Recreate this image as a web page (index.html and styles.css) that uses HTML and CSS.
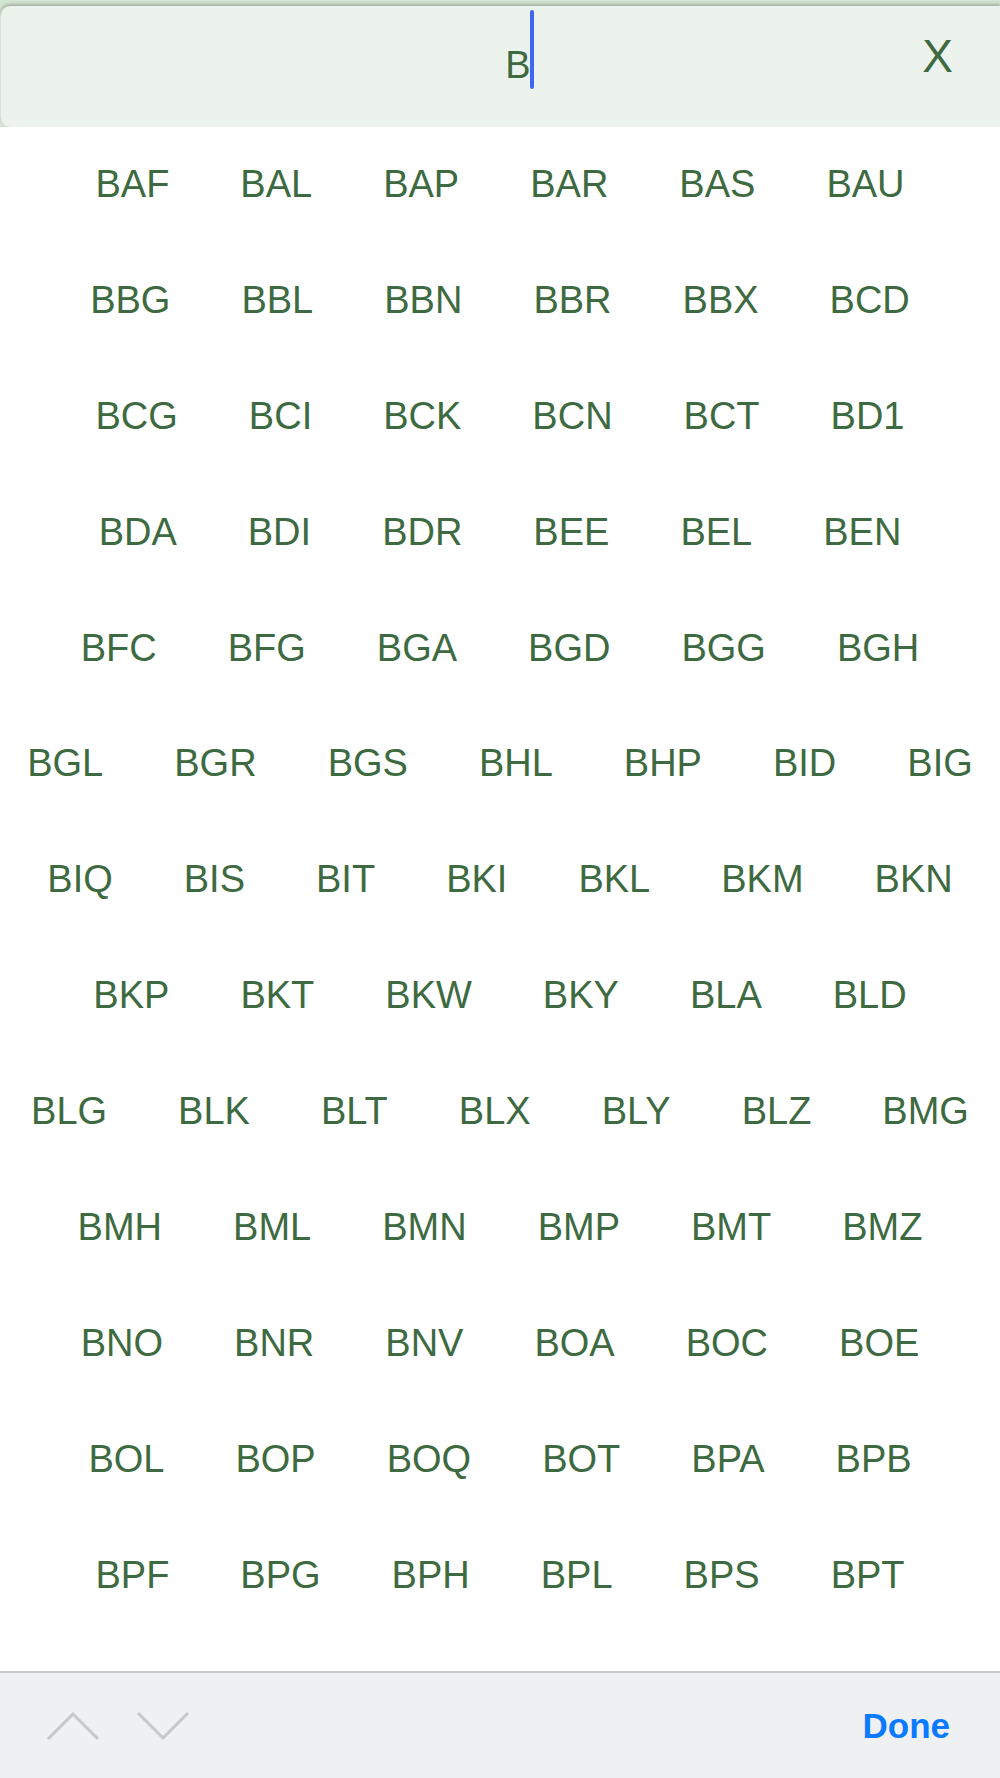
FILE: index.html
```html
<!DOCTYPE html>
<html lang="en">
<head>
    <meta charset="UTF-8">
    <meta name="viewport" content="width=device-width, initial-scale=1.0">
    <title>Station Search</title>
    <link rel="stylesheet" href="styles.css">
</head>
<body>
    <header class="search">
        <div class="search-bar">
            <div class="search-text">B<span class="caret"></span></div>
            <button class="clear-button">X</button>
        </div>
    </header>
    <main class="codes">
        <div class="code-row"><span>BAF</span><span>BAL</span><span>BAP</span><span>BAR</span><span>BAS</span><span>BAU</span></div>
        <div class="code-row"><span>BBG</span><span>BBL</span><span>BBN</span><span>BBR</span><span>BBX</span><span>BCD</span></div>
        <div class="code-row"><span>BCG</span><span>BCI</span><span>BCK</span><span>BCN</span><span>BCT</span><span>BD1</span></div>
        <div class="code-row"><span>BDA</span><span>BDI</span><span>BDR</span><span>BEE</span><span>BEL</span><span>BEN</span></div>
        <div class="code-row"><span>BFC</span><span>BFG</span><span>BGA</span><span>BGD</span><span>BGG</span><span>BGH</span></div>
        <div class="code-row"><span>BGL</span><span>BGR</span><span>BGS</span><span>BHL</span><span>BHP</span><span>BID</span><span>BIG</span></div>
        <div class="code-row"><span>BIQ</span><span>BIS</span><span>BIT</span><span>BKI</span><span>BKL</span><span>BKM</span><span>BKN</span></div>
        <div class="code-row"><span>BKP</span><span>BKT</span><span>BKW</span><span>BKY</span><span>BLA</span><span>BLD</span></div>
        <div class="code-row"><span>BLG</span><span>BLK</span><span>BLT</span><span>BLX</span><span>BLY</span><span>BLZ</span><span>BMG</span></div>
        <div class="code-row"><span>BMH</span><span>BML</span><span>BMN</span><span>BMP</span><span>BMT</span><span>BMZ</span></div>
        <div class="code-row"><span>BNO</span><span>BNR</span><span>BNV</span><span>BOA</span><span>BOC</span><span>BOE</span></div>
        <div class="code-row"><span>BOL</span><span>BOP</span><span>BOQ</span><span>BOT</span><span>BPA</span><span>BPB</span></div>
        <div class="code-row"><span>BPF</span><span>BPG</span><span>BPH</span><span>BPL</span><span>BPS</span><span>BPT</span></div>
    </main>
    <footer class="toolbar">
        <div class="arrows">
            <svg width="56" height="30" viewBox="0 0 56 30"><polyline points="3,28 28,3 53,28" fill="none" stroke="#c8c8c8" stroke-width="3"/></svg>
            <svg width="56" height="30" viewBox="0 0 56 30"><polyline points="3,2 28,27 53,2" fill="none" stroke="#c8c8c8" stroke-width="3"/></svg>
        </div>
        <button class="done-button">Done</button>
    </footer>
</body>
</html>
```

FILE: styles.css
```css
body {
    margin: 0;
    height: 100vh;
    display: flex;
    flex-direction: column;
    background-color: #fff;
    font-family: 'Liberation Sans', Arial, sans-serif;
    color: #3e6a41;
    overflow: hidden;
}
.search {
    background-color: #d3e4d0;
    padding-top: 6px;
}
.search-bar {
    position: relative;
    height: 121px;
    background-color: #ecf3ec;
    border-radius: 10px 0 0 10px;
    border-left: 1px solid #d5e3d3;
    box-shadow: 0 -2px 3px rgba(110, 120, 110, 0.45);
}
.search-text {
    padding-left: 38px;
    padding-top: 4px;
    text-align: center;
    font-size: 38px;
    line-height: 38px;
}
.caret {
    display: inline-block;
    width: 4px;
    height: 79px;
    margin-left: -1px;
    border-radius: 2px;
    background-color: #4065ef;
    vertical-align: -11px;
}
.clear-button {
    position: absolute;
    top: 25px;
    right: 47px;
    padding: 0;
    border: none;
    background: none;
    font-family: inherit;
    font-size: 46px;
    line-height: 50px;
    color: #3e6a41;
}
.codes {
    flex: 1;
}
.code-row {
    display: flex;
    justify-content: center;
    gap: 71px;
    height: 115.9px;
    line-height: 115.9px;
    font-size: 38px;
}
.toolbar {
    height: 105px;
    border-top: 2px solid #c9c9cb;
    background-color: #eff0f1;
    display: flex;
    align-items: center;
    justify-content: space-between;
    padding: 0 50px 0 45px;
}
.arrows {
    display: flex;
    gap: 34px;
}
.arrows svg {
    display: block;
}
.done-button {
    padding: 0;
    border: none;
    background: none;
    font-family: inherit;
    font-weight: bold;
    font-size: 35px;
    color: #0a7aff;
}
```
